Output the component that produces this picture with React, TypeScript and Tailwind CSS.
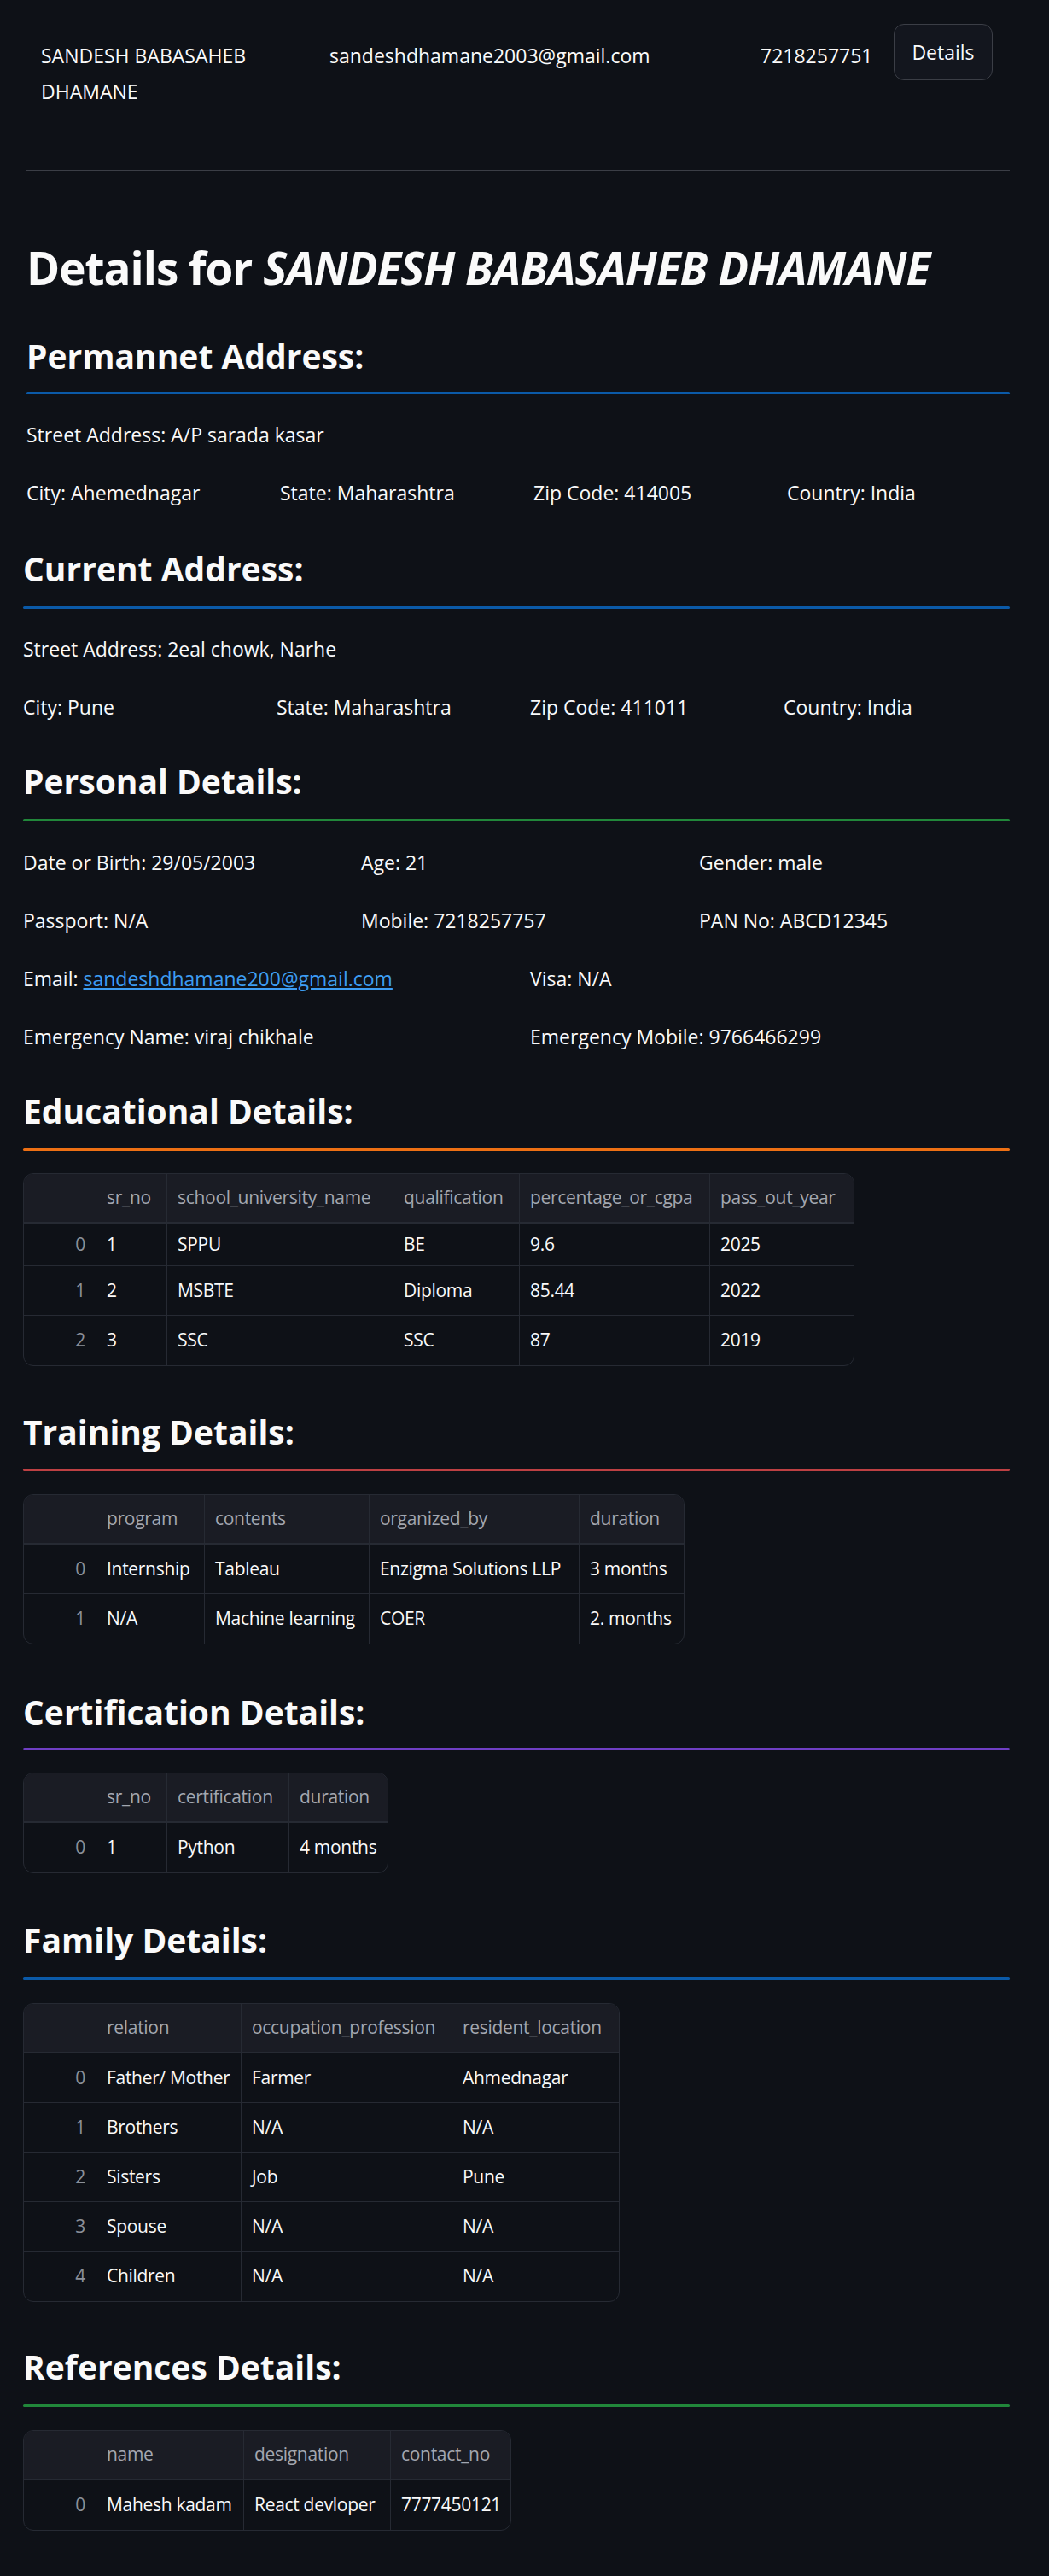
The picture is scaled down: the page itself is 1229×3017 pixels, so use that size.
import React from 'react';

type Table = {
  cols: string[];
  widths: string[];
  rows: string[][];
  rowH?: string[];
};

const education: Table = {
  cols: ['sr_no', 'school_university_name', 'qualification', 'percentage_or_cgpa', 'pass_out_year'],
  widths: ['w-[84px]', 'w-[83px]', 'w-[265px]', 'w-[148px]', 'w-[223px]', 'w-[169px]'],
  rows: [
    ['1', 'SPPU', 'BE', '9.6', '2025'],
    ['2', 'MSBTE', 'Diploma', '85.44', '2022'],
    ['3', 'SSC', 'SSC', '87', '2019'],
  ],
  rowH: ['h-[50px]', 'h-[58px]', 'h-[58px]'],
};

const training: Table = {
  cols: ['program', 'contents', 'organized_by', 'duration'],
  widths: ['w-[84px]', 'w-[127px]', 'w-[193px]', 'w-[246px]', 'w-[123px]'],
  rows: [
    ['Internship', 'Tableau', 'Enzigma Solutions LLP', '3 months'],
    ['N/A', 'Machine learning', 'COER', '2. months'],
  ],
};

const certification: Table = {
  cols: ['sr_no', 'certification', 'duration'],
  widths: ['w-[84px]', 'w-[83px]', 'w-[143px]', 'w-[116px]'],
  rows: [['1', 'Python', '4 months']],
};

const family: Table = {
  cols: ['relation', 'occupation_profession', 'resident_location'],
  widths: ['w-[84px]', 'w-[170px]', 'w-[247px]', 'w-[196px]'],
  rows: [
    ['Father/ Mother', 'Farmer', 'Ahmednagar'],
    ['Brothers', 'N/A', 'N/A'],
    ['Sisters', 'Job', 'Pune'],
    ['Spouse', 'N/A', 'N/A'],
    ['Children', 'N/A', 'N/A'],
  ],
};

const references: Table = {
  cols: ['name', 'designation', 'contact_no'],
  widths: ['w-[84px]', 'w-[173px]', 'w-[172px]', 'w-[141px]'],
  rows: [['Mahesh kadam', 'React devloper', '7777450121']],
};

function DataTable({ t }: { t: Table }) {
  return (
    <div className="inline-flex flex-col rounded-xl border border-[#262a33] overflow-hidden text-[21px] tracking-[-0.3px]">
      <div className="flex h-[58px] bg-[#1a1c24] border-b-2 border-[#262a33] text-[#a3a7b0]">
        <div className={t.widths[0]} />
        {t.cols.map((c, i) => (
          <div key={c} className={`${t.widths[i + 1]} flex items-center px-3 border-l border-[#262a33] whitespace-nowrap`}>
            {c}
          </div>
        ))}
      </div>
      {t.rows.map((r, ri) => (
        <div
          key={ri}
          className={`flex ${t.rowH ? t.rowH[ri] : 'h-[58px]'} ${ri < t.rows.length - 1 ? 'border-b border-[#262a33]' : ''}`}
        >
          <div className={`${t.widths[0]} flex items-center justify-end px-3 text-[#8c9099]`}>{ri}</div>
          {r.map((v, i) => (
            <div key={i} className={`${t.widths[i + 1]} flex items-center px-3 border-l border-[#262a33] whitespace-nowrap`}>
              {v}
            </div>
          ))}
        </div>
      ))}
    </div>
  );
}

function Subheader({ children, className }: { children: React.ReactNode; className: string }) {
  return <h3 className={`text-[39px] leading-[50px] font-bold ${className}`}>{children}</h3>;
}

function Divider({ color, className }: { color: string; className: string }) {
  return <div className={`h-[3px] rounded-full ${color} ${className}`} />;
}

export default function App() {
  return (
    <div className="min-h-[3017px] bg-[#0e1117] text-[#fafafa] [font-family:'Open_Sans',sans-serif] pb-[52px]">
      {/* top bar */}
      <div className="grid grid-cols-[314px_481px_132px_116px] gap-x-6 pl-[48px] pt-[28px] items-start text-[23px] leading-[42px]">
        <div className="mt-[16px]">SANDESH BABASAHEB DHAMANE</div>
        <div className="mt-[16px]">sandeshdhamane2003@gmail.com</div>
        <div className="mt-[16px]">7218257751</div>
        <button className="h-[66px] w-[116px] rounded-xl border border-[#3b3e46] bg-[#13161e] text-[23px]">
          Details
        </button>
      </div>

      <div className="w-[1152px] ml-[31px]">
        <div className="mt-[71px] h-px bg-[#3b3e46]" />

        <h1 className="mt-[79px] text-[53px] leading-[70px] font-bold whitespace-nowrap tracking-[-1px]">
          Details for <em>SANDESH BABASAHEB DHAMANE</em>
        </h1>

        <Subheader className="mt-[43px]">Permannet Address:</Subheader>
        <Divider color="bg-[#0b5aa8]" className="mt-[17px]" />
        <div className="text-[23px] leading-[34px]">
          <p className="mt-[30px]">Street Address: A/P sarada kasar</p>
          <div className="mt-[34px] grid grid-cols-[273px_273px_273px_273px] gap-x-6">
            <span>City: Ahemednagar</span>
            <span>State: Maharashtra</span>
            <span>Zip Code: 414005</span>
            <span>Country: India</span>
          </div>
        </div>
      </div>

      <div className="w-[1156px] ml-[27px]">
        <Subheader className="mt-[47px]">Current Address:</Subheader>
        <Divider color="bg-[#0b5aa8]" className="mt-[19px]" />
        <div className="text-[23px] leading-[34px]">
          <p className="mt-[30px]">Street Address: 2eal chowk, Narhe</p>
          <div className="mt-[34px] grid grid-cols-[273px_273px_273px_273px] gap-x-6">
            <span>City: Pune</span>
            <span>State: Maharashtra</span>
            <span>Zip Code: 411011</span>
            <span>Country: India</span>
          </div>
        </div>

        <Subheader className="mt-[45px]">Personal Details:</Subheader>
        <Divider color="bg-[#21873a]" className="mt-[19px]" />
        <div className="mt-[31px] flex flex-col gap-y-[34px] text-[23px] leading-[34px]">
          <div className="grid grid-cols-[372px_372px_372px] gap-x-6">
            <span>Date or Birth: 29/05/2003</span>
            <span>Age: 21</span>
            <span>Gender: male</span>
          </div>
          <div className="grid grid-cols-[372px_372px_372px] gap-x-6">
            <span>Passport: N/A</span>
            <span>Mobile: 7218257757</span>
            <span>PAN No: ABCD12345</span>
          </div>
          <div className="grid grid-cols-[570px_570px] gap-x-6">
            <span>
              Email: <a className="text-[#3d9df3] underline">sandeshdhamane200@gmail.com</a>
            </span>
            <span>Visa: N/A</span>
          </div>
          <div className="grid grid-cols-[570px_570px] gap-x-6">
            <span>Emergency Name: viraj chikhale</span>
            <span>Emergency Mobile: 9766466299</span>
          </div>
        </div>

        <Subheader className="mt-[45px]">Educational Details:</Subheader>
        <Divider color="bg-[#ed7014]" className="mt-[19px]" />
        <div className="mt-[26px]">
          <DataTable t={education} />
        </div>

        <Subheader className="mt-[52px]">Training Details:</Subheader>
        <Divider color="bg-[#bd4043]" className="mt-[18px]" />
        <div className="mt-[27px]">
          <DataTable t={training} />
        </div>

        <Subheader className="mt-[54px]">Certification Details:</Subheader>
        <Divider color="bg-[#6f3fc4]" className="mt-[17px]" />
        <div className="mt-[26px]">
          <DataTable t={certification} />
        </div>

        <Subheader className="mt-[53px]">Family Details:</Subheader>
        <Divider color="bg-[#0b5aa8]" className="mt-[19px]" />
        <div className="mt-[27px]">
          <DataTable t={family} />
        </div>

        <Subheader className="mt-[51px]">References Details:</Subheader>
        <Divider color="bg-[#21873a]" className="mt-[19px]" />
        <div className="mt-[27px]">
          <DataTable t={references} />
        </div>
      </div>
    </div>
  );
}
